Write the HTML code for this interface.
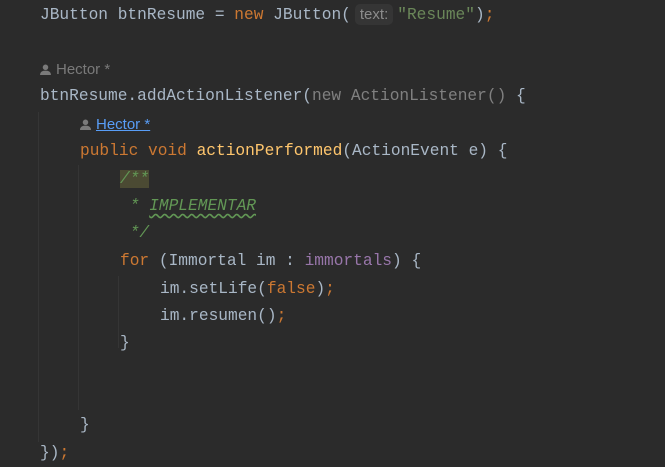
<!DOCTYPE html>
<html><head><style>
html,body{margin:0;padding:0;background:#2b2b2b;width:665px;height:463px;overflow:hidden}
.l{position:absolute;left:40px;height:27px;line-height:27px;font-family:"Liberation Mono",monospace;font-size:16.2px;color:#a9b7c6;white-space:pre}
.k{color:#cc7832}.s{color:#6a8759}.m{color:#ffc66d}.f{color:#9876aa}.c{color:#629755;font-style:italic}.g{color:#808080}
.h{font-family:"Liberation Sans",sans-serif;font-size:15px;color:#7a7a7a}
.hint{font-family:"Liberation Sans",sans-serif;font-size:15px;color:#8c8c8c;background:#353535;border-radius:5px;padding:2px 5px;margin:0 4px 0 4px}
.g1{position:absolute;width:1px;background:#353535}
.u{text-decoration:underline wavy #629755;text-underline-offset:3px}
svg{vertical-align:-1px;margin-right:5px}
</style></head><body>
<div class="g1" style="left:38px;top:112px;height:330px"></div>
<div class="g1" style="left:78px;top:165px;height:245px"></div>
<div class="g1" style="left:118px;top:276px;height:72px"></div>
<div class="l" style="top:1px">JButton btnResume = <span class="k">new</span> JButton(<span class="hint">text:</span><span class="s">"Resume"</span>)<span class="k">;</span></div>
<div class="l h" style="top:56px"><svg width="11" height="11" viewBox="0 0 10 10"><circle cx="5" cy="3" r="2.5" fill="#7a7a7a"/><path d="M0 10 Q0 6 5 6 Q10 6 10 10Z" fill="#7a7a7a"/></svg>Hector *</div>
<div class="l" style="top:83px">btnResume.addActionListener(<span class="g">new ActionListener()</span> {</div>
<div class="l h" style="top:111px;left:80px;color:#589df6"><svg width="11" height="11" viewBox="0 0 10 10"><circle cx="5" cy="3" r="2.5" fill="#7a7a7a"/><path d="M0 10 Q0 6 5 6 Q10 6 10 10Z" fill="#7a7a7a"/></svg><span style="text-decoration:underline">Hector *</span></div>
<div class="l" style="top:138px;left:80px"><span class="k">public void </span><span class="m">actionPerformed</span>(ActionEvent e) {</div>
<div class="l c" style="top:166px;left:120px"><span style="background:#4b4a33">/**</span></div>
<div class="l c" style="top:193px;left:120px"> * <span class="u">IMPLEMENTAR</span></div>
<div class="l c" style="top:220px;left:120px"> */</div>
<div class="l" style="top:248px;left:120px"><span class="k">for </span>(Immortal im : <span class="f">immortals</span>) {</div>
<div class="l" style="top:276px;left:160px">im.setLife(<span class="k">false</span>)<span class="k">;</span></div>
<div class="l" style="top:303px;left:160px">im.resumen()<span class="k">;</span></div>
<div class="l" style="top:330px;left:120px">}</div>
<div class="l" style="top:412px;left:80px">}</div>
<div class="l" style="top:440px">})<span class="k">;</span></div>
</body></html>
